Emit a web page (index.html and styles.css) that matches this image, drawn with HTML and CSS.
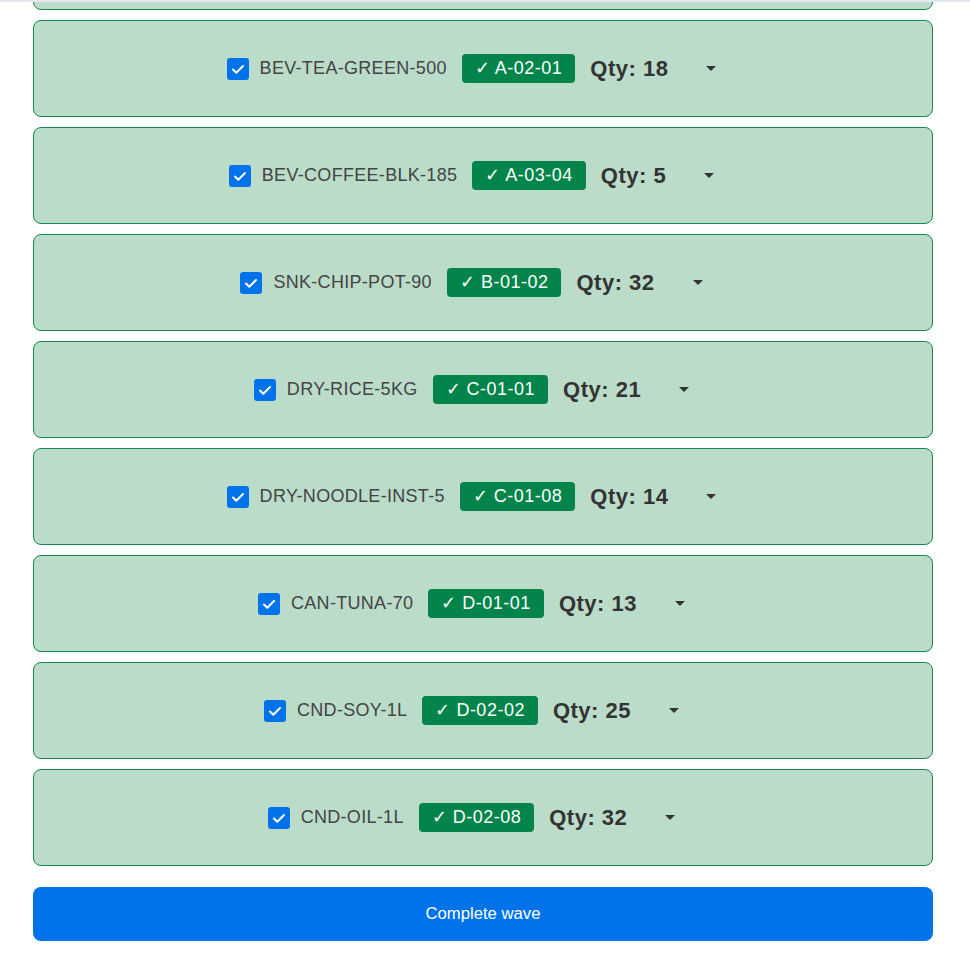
FILE: index.html
```html
<!DOCTYPE html>
<html lang="en">
<head>
    <meta charset="UTF-8">
    <meta name="viewport" content="width=device-width, initial-scale=1.0">
    <title>Pick Wave</title>
    <link rel="stylesheet" href="styles.css">
</head>
<body>
    <div class="topbar"></div>

    <div class="wave">
        <ul class="pick-list">
            <!-- previous pick, scrolled mostly out of view -->
            <li class="pick done"></li>
            <li class="pick done">
                <span class="check"><svg viewBox="0 0 22 22"><path d="M6 11.5l3.3 3.2L16 8" /></svg></span>
                <span class="sku">BEV-TEA-GREEN-500</span>
                <span class="loc">&#10003; A-02-01</span>
                <span class="qty">Qty: 18</span>
                <button class="toggle"><span class="caret"></span></button>
            </li>
            <li class="pick done">
                <span class="check"><svg viewBox="0 0 22 22"><path d="M6 11.5l3.3 3.2L16 8" /></svg></span>
                <span class="sku">BEV-COFFEE-BLK-185</span>
                <span class="loc">&#10003; A-03-04</span>
                <span class="qty">Qty: 5</span>
                <button class="toggle"><span class="caret"></span></button>
            </li>
            <li class="pick done">
                <span class="check"><svg viewBox="0 0 22 22"><path d="M6 11.5l3.3 3.2L16 8" /></svg></span>
                <span class="sku">SNK-CHIP-POT-90</span>
                <span class="loc">&#10003; B-01-02</span>
                <span class="qty">Qty: 32</span>
                <button class="toggle"><span class="caret"></span></button>
            </li>
            <li class="pick done">
                <span class="check"><svg viewBox="0 0 22 22"><path d="M6 11.5l3.3 3.2L16 8" /></svg></span>
                <span class="sku">DRY-RICE-5KG</span>
                <span class="loc">&#10003; C-01-01</span>
                <span class="qty">Qty: 21</span>
                <button class="toggle"><span class="caret"></span></button>
            </li>
            <li class="pick done">
                <span class="check"><svg viewBox="0 0 22 22"><path d="M6 11.5l3.3 3.2L16 8" /></svg></span>
                <span class="sku">DRY-NOODLE-INST-5</span>
                <span class="loc">&#10003; C-01-08</span>
                <span class="qty">Qty: 14</span>
                <button class="toggle"><span class="caret"></span></button>
            </li>
            <li class="pick done">
                <span class="check"><svg viewBox="0 0 22 22"><path d="M6 11.5l3.3 3.2L16 8" /></svg></span>
                <span class="sku">CAN-TUNA-70</span>
                <span class="loc">&#10003; D-01-01</span>
                <span class="qty">Qty: 13</span>
                <button class="toggle"><span class="caret"></span></button>
            </li>
            <li class="pick done">
                <span class="check"><svg viewBox="0 0 22 22"><path d="M6 11.5l3.3 3.2L16 8" /></svg></span>
                <span class="sku">CND-SOY-1L</span>
                <span class="loc">&#10003; D-02-02</span>
                <span class="qty">Qty: 25</span>
                <button class="toggle"><span class="caret"></span></button>
            </li>
            <li class="pick done">
                <span class="check"><svg viewBox="0 0 22 22"><path d="M6 11.5l3.3 3.2L16 8" /></svg></span>
                <span class="sku">CND-OIL-1L</span>
                <span class="loc">&#10003; D-02-08</span>
                <span class="qty">Qty: 32</span>
                <button class="toggle"><span class="caret"></span></button>
            </li>
        </ul>

        <button class="complete">Complete wave</button>
    </div>
</body>
</html>
```

FILE: styles.css
```css
body {
    margin: 0;
    font-family: "Liberation Sans", Arial, sans-serif;
    background: #fff;
}
.topbar {
    position: fixed;
    top: 0;
    left: 0;
    right: 0;
    height: 2px;
    background: #e4e8ee;
    z-index: 5;
}
.wave {
    width: 900px;
    margin-left: 33px;
    padding-bottom: 40px;
}
.pick-list {
    list-style: none;
    margin: -87px 0 0;
    padding: 0;
    display: flex;
    flex-direction: column;
    gap: 10px;
}
.pick {
    box-sizing: border-box;
    height: 97px;
    border: 1px solid #138a4e;
    border-radius: 8px;
    background: #bbdcc9;
    display: flex;
    align-items: center;
    justify-content: center;
    gap: 15px;
}
.check {
    width: 22px;
    height: 22px;
    border-radius: 3px;
    background: #0073ea;
    display: flex;
    margin-right: -4px;
}
.check svg {
    width: 22px;
    height: 22px;
}
.check path {
    fill: none;
    stroke: #fff;
    stroke-width: 2;
    stroke-linecap: round;
    stroke-linejoin: round;
}
.sku {
    font-size: 18px;
    letter-spacing: 0.3px;
    color: #444;
}
.loc {
    background: #02844a;
    color: #fff;
    font-size: 18px;
    letter-spacing: 0.5px;
    line-height: 29px;
    padding: 0 13px;
    border-radius: 4px;
}
.qty {
    font-size: 22px;
    letter-spacing: 0.5px;
    font-weight: bold;
    color: #333;
}
.toggle {
    width: 56px;
    height: 30px;
    border: none;
    background: none;
    padding: 0;
    display: flex;
    align-items: center;
    justify-content: center;
}
.caret {
    width: 0;
    height: 0;
    border-left: 5.5px solid transparent;
    border-right: 5.5px solid transparent;
    border-top: 5px solid #333;
}
.complete {
    display: block;
    width: 100%;
    height: 54px;
    margin-top: 21px;
    border: none;
    border-radius: 8px;
    background: #0073ea;
    color: #fff;
    font-family: "Liberation Sans", Arial, sans-serif;
    font-size: 16.7px;
}
```
